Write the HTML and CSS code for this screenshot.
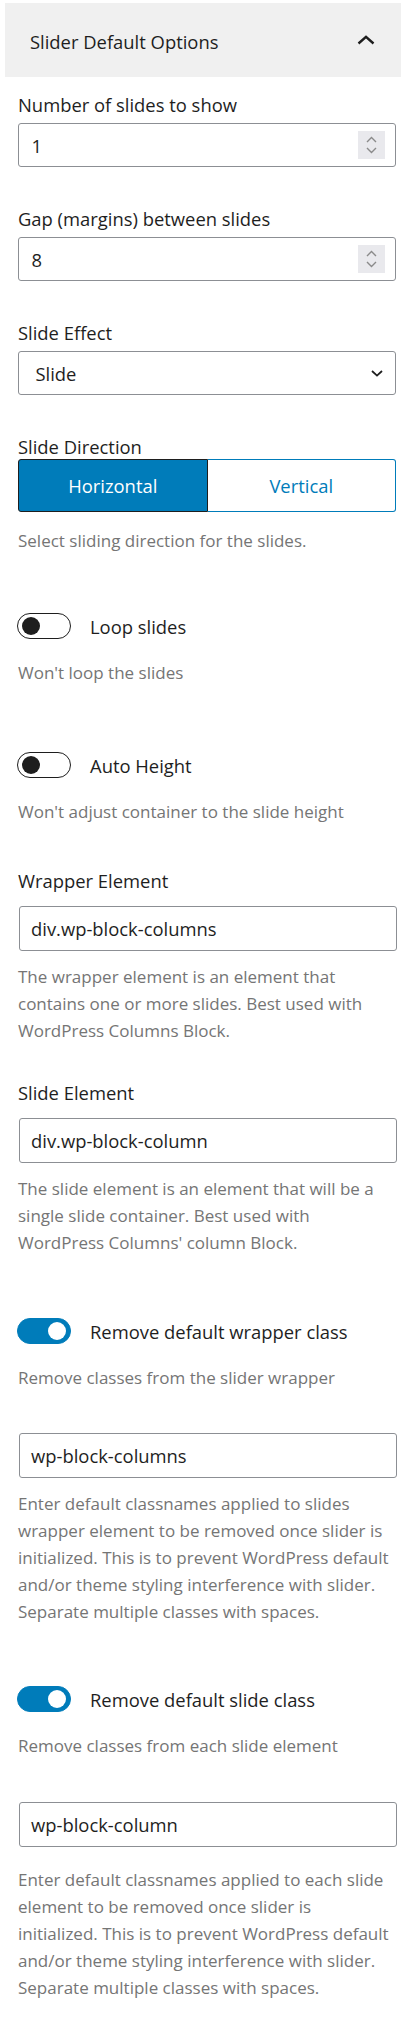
FILE: index.html
```html
<!DOCTYPE html>
<html lang="en">
<head>
<meta charset="utf-8">
<title>Slider Default Options</title>
<link rel="stylesheet" href="styles.css">
</head>
<body>
<div class="panel">
  <div class="panel-header">
    <span class="panel-title">Slider Default Options</span>
    <svg class="chev-up" width="18" height="10" viewBox="0 0 18 10"><path d="M1.5 8.5 L9 1.8 L16.5 8.5" fill="none" stroke="#1e1e1e" stroke-width="2.4"/></svg>
  </div>
  <div class="panel-body">

    <div class="control first">
      <div class="label">Number of slides to show</div>
      <div class="input number">
        <span>1</span>
        <svg class="spin" width="27" height="28" viewBox="0 0 27 28"><rect width="27" height="28" fill="#e9e9ed"/><path d="M9 11 L13.5 6.5 L18 11" fill="none" stroke="#8a8a8a" stroke-width="1.4"/><path d="M9 17 L13.5 21.5 L18 17" fill="none" stroke="#8a8a8a" stroke-width="1.4"/></svg>
      </div>
    </div>

    <div class="control">
      <div class="label">Gap (margins) between slides</div>
      <div class="input number">
        <span>8</span>
        <svg class="spin" width="27" height="28" viewBox="0 0 27 28"><rect width="27" height="28" fill="#e9e9ed"/><path d="M9 11 L13.5 6.5 L18 11" fill="none" stroke="#8a8a8a" stroke-width="1.4"/><path d="M9 17 L13.5 21.5 L18 17" fill="none" stroke="#8a8a8a" stroke-width="1.4"/></svg>
      </div>
    </div>

    <div class="control">
      <div class="label">Slide Effect</div>
      <div class="input select">
        <span>Slide</span>
        <svg class="chev-down" width="12" height="7" viewBox="0 0 12 7"><path d="M1 1 L6 5.6 L11 1" fill="none" stroke="#1e1e1e" stroke-width="1.8"/></svg>
      </div>
    </div>

    <div class="control">
      <div class="label label-tight">Slide Direction</div>
      <div class="button-group">
        <span class="seg seg-active">Horizontal</span>
        <span class="seg">Vertical</span>
      </div>
      <p class="help help-group">Select sliding direction for the slides.</p>
    </div>

    <div class="control toggle-first">
      <div class="toggle-row">
        <span class="toggle"><span class="knob"></span></span>
        <span class="toggle-label">Loop slides</span>
      </div>
      <p class="help help-toggle">Won't loop the slides</p>
    </div>

    <div class="control toggle-second">
      <div class="toggle-row">
        <span class="toggle"><span class="knob"></span></span>
        <span class="toggle-label">Auto Height</span>
      </div>
      <p class="help help-toggle">Won't adjust container to the slide height</p>
    </div>

    <div class="control text-first">
      <div class="label label-text">Wrapper Element</div>
      <div class="input text">div.wp-block-columns</div>
      <p class="help help-text">The wrapper element is an element that contains one or more slides. Best used with WordPress Columns Block.</p>
    </div>

    <div class="control text-second">
      <div class="label label-text">Slide Element</div>
      <div class="input text">div.wp-block-column</div>
      <p class="help help-text">The slide element is an element that will be a single slide container. Best used with WordPress Columns' column Block.</p>
    </div>

    <div class="control toggle-after-text">
      <div class="toggle-row">
        <span class="toggle on"><span class="knob"></span></span>
        <span class="toggle-label">Remove default wrapper class</span>
      </div>
      <p class="help help-toggle">Remove classes from the slider wrapper</p>
    </div>

    <div class="control text-after-toggle">
      <div class="input text">wp-block-columns</div>
      <p class="help help-text">Enter default classnames applied to slides wrapper element to be removed once slider is initialized. This is to prevent WordPress default and/or theme styling interference with slider. Separate multiple classes with spaces.</p>
    </div>

    <div class="control toggle-after-long">
      <div class="toggle-row">
        <span class="toggle on"><span class="knob"></span></span>
        <span class="toggle-label">Remove default slide class</span>
      </div>
      <p class="help help-toggle">Remove classes from each slide element</p>
    </div>

    <div class="control text-last">
      <div class="input text">wp-block-column</div>
      <p class="help help-last">Enter default classnames applied to each slide element to be removed once slider is initialized. This is to prevent WordPress default and/or theme styling interference with slider. Separate multiple classes with spaces.</p>
    </div>

  </div>
</div>
</body>
</html>
```

FILE: styles.css
```css
* { box-sizing: border-box; }

html, body {
  margin: 0;
  padding: 0;
  background: #ffffff;
}

body {
  width: 410px;
  height: 2020px;
  overflow: hidden;
  font-family: "Open Sans", "Noto Sans", sans-serif;
  color: #1e1e1e;
}

.panel {
  margin: 3px 9px 0 5px;
}

.panel-header {
  height: 74px;
  background: #f0f0f0;
  display: flex;
  align-items: center;
  justify-content: space-between;
  padding: 0 26px 0 25px;
}

.panel-title {
  font-size: 18.4px;
  line-height: 24px;
  padding-top: 4px;
}

.chev-up { display: block; }

.panel-body {
  padding: 0 5px 0 13px;
}

.control { margin-top: 40px; }
.control.first { margin-top: 16px; }
.control.toggle-first { margin-top: 59px; }
.control.toggle-second { margin-top: 66px; }
.control.text-first { margin-top: 44px; }
.control.text-second { margin-top: 37px; }
.control.toggle-after-text { margin-top: 62px; }
.control.text-after-toggle { margin-top: 42px; }
.control.toggle-after-long { margin-top: 61px; }
.control.text-last { margin-top: 43px; }

.label {
  font-size: 18.4px;
  line-height: 24px;
  margin-bottom: 6px;
}
.label.label-tight { margin-bottom: 0; }
.label.label-text { margin-bottom: 13px; }

.input {
  height: 44px;
  border: 1.5px solid #8c8f94;
  border-radius: 3px;
  display: flex;
  align-items: center;
  justify-content: space-between;
  font-size: 18.4px;
  color: #1e1e1e;
  background: #fff;
}

.input.number { padding: 0 10.5px 0 12.5px; }
.input.select { padding: 0 12.5px 0 16.5px; }
.spin, .chev-down { display: block; }

.input.text {
  height: 45px;
  margin: 0 -1px 0 1px;
  padding: 0 11px;
  justify-content: flex-start;
}

.button-group {
  display: flex;
  height: 53px;
}

.seg {
  flex: 1;
  display: flex;
  align-items: center;
  justify-content: center;
  font-size: 18.4px;
  color: #007cba;
  background: #fff;
  border: 1.5px solid #007cba;
  border-left: none;
  border-radius: 0 3px 3px 0;
}

.seg.seg-active {
  color: #fff;
  background: #007cba;
  border: 1.5px solid #1e1e1e;
  border-radius: 3px 0 0 3px;
}

.help {
  margin: 0;
  max-width: 375px;
  font-size: 17px;
  line-height: 27px;
  color: #757575;
}
.help.help-group { margin-top: 15px; }
.help.help-toggle { margin-top: 19px; }
.help.help-text { margin-top: 12px; }
.help.help-last { margin-top: 19px; }

.toggle-row {
  display: flex;
  align-items: flex-start;
  gap: 19px;
  margin-left: -1px;
}

.toggle {
  width: 54px;
  height: 26px;
  border: 1.5px solid #1e1e1e;
  border-radius: 13px;
  background: #fff;
  display: flex;
  align-items: center;
  padding: 0 4px;
  flex: none;
}

.knob {
  width: 18px;
  height: 18px;
  border-radius: 50%;
  background: #1e1e1e;
}

.toggle.on {
  background: #007cba;
  border-color: #007cba;
  justify-content: flex-end;
}

.toggle.on .knob {
  background: #fff;
}

.toggle-label {
  font-size: 18.4px;
  line-height: 26px;
  padding-top: 1px;
}
```
